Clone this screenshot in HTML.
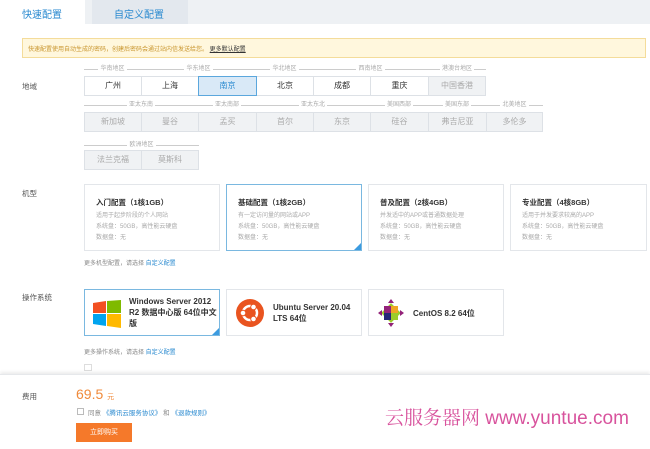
<!DOCTYPE html>
<html><head><meta charset="utf-8"><style>
*{margin:0;padding:0;box-sizing:border-box}
body{width:650px;height:449px;background:#fff;font-family:"Liberation Sans","Noto Sans CJK SC",sans-serif;position:relative;overflow:hidden;color:#333}
.a{position:absolute;white-space:nowrap}
.btn{position:absolute;height:20px;border:1px solid #dde1e6;font-size:8px;text-align:center;line-height:18px;background:#fff;color:#333}
.dis{background:#f0f2f4;color:#aaa}
.sel{background:#d9e9f7;border-color:#5ba7dd;color:#2a8ad0;z-index:2}
.gl{position:absolute;font-size:6px;color:#aaa;text-align:center;height:8px;line-height:8px}
.gl span{background:#fff;padding:0 2px;position:relative}
.gl:before{content:"";position:absolute;left:0;right:0;top:4px;border-top:1px solid #ccc}
.card{position:absolute;border:1px solid #e3e6ea;background:#fff}
.card.s{border-color:#7ab8e0}
.card.s:after{content:"";position:absolute;right:0;bottom:0;border-style:solid;border-width:0 0 7px 7px;border-color:transparent transparent #3c9be0 transparent}
.ct{position:absolute;left:11px;top:12px;font-size:7.5px;color:#333;font-weight:bold}
.cl{position:absolute;left:11px;font-size:6px;color:#aaa}
.lab{position:absolute;left:22px;font-size:7.5px;color:#555}
.osn{position:absolute;font-size:8px;font-weight:bold;color:#333;line-height:11px}
</style></head><body>
<div class="a" style="left:0;top:0;width:650px;height:24px;background:#eef1f4"></div>
<div class="a" style="left:0;top:0;width:85px;height:24px;background:#fff"></div>
<div class="a" style="left:22px;top:6px;font-size:10px;color:#2a8ad0">快速配置</div>
<div class="a" style="left:92px;top:0;width:96px;height:24px;background:#e3e8ee"></div>
<div class="a" style="left:114px;top:6px;font-size:10px;color:#2a8ad0">自定义配置</div>

<div class="a" style="left:22px;top:38px;width:624px;height:20px;background:#fff7dd;border:1px solid #f4dc9a"></div>
<div class="a" style="left:28px;top:44px;font-size:6px;color:#c9962f">快速配置使用自动生成的密码，创建后密码会通过站内信发送给您。 <span style="color:#333;text-decoration:underline">更多默认配置</span></div>

<div class="lab" style="top:81px">地域</div>
<div class="gl" style="left:84px;top:65px;width:57px"><span>华南地区</span></div>
<div class="gl" style="left:141px;top:65px;width:115px"><span>华东地区</span></div>
<div class="gl" style="left:256px;top:65px;width:57px"><span>华北地区</span></div>
<div class="gl" style="left:313px;top:65px;width:115px"><span>西南地区</span></div>
<div class="gl" style="left:428px;top:65px;width:58px"><span>港澳台地区</span></div>
<div class="btn" style="left:84px;top:76px;width:58px">广州</div>
<div class="btn" style="left:141px;top:76px;width:58px">上海</div>
<div class="btn sel" style="left:198px;top:76px;width:59px">南京</div>
<div class="btn" style="left:256px;top:76px;width:58px">北京</div>
<div class="btn" style="left:313px;top:76px;width:58px">成都</div>
<div class="btn" style="left:370px;top:76px;width:59px">重庆</div>
<div class="btn dis" style="left:428px;top:76px;width:58px">中国香港</div>

<div class="gl" style="left:84px;top:101px;width:114px"><span>亚太东南</span></div>
<div class="gl" style="left:198px;top:101px;width:58px"><span>亚太南部</span></div>
<div class="gl" style="left:256px;top:101px;width:114px"><span>亚太东北</span></div>
<div class="gl" style="left:370px;top:101px;width:58px"><span>美国西部</span></div>
<div class="gl" style="left:428px;top:101px;width:58px"><span>美国东部</span></div>
<div class="gl" style="left:486px;top:101px;width:57px"><span>北美地区</span></div>
<div class="btn dis" style="left:84px;top:112px;width:58px">新加坡</div>
<div class="btn dis" style="left:141px;top:112px;width:58px">曼谷</div>
<div class="btn dis" style="left:198px;top:112px;width:59px">孟买</div>
<div class="btn dis" style="left:256px;top:112px;width:58px">首尔</div>
<div class="btn dis" style="left:313px;top:112px;width:58px">东京</div>
<div class="btn dis" style="left:370px;top:112px;width:59px">硅谷</div>
<div class="btn dis" style="left:428px;top:112px;width:59px">弗吉尼亚</div>
<div class="btn dis" style="left:486px;top:112px;width:57px">多伦多</div>

<div class="gl" style="left:84px;top:141px;width:115px"><span>欧洲地区</span></div>
<div class="btn dis" style="left:84px;top:150px;width:58px">法兰克福</div>
<div class="btn dis" style="left:141px;top:150px;width:58px">莫斯科</div>

<div class="lab" style="top:188px">机型</div>
<div class="card" style="left:84px;top:184px;width:136px;height:67px"><div class="ct">入门配置（1核1GB）</div><div class="cl" style="top:25px">适用于起步阶段的个人网站</div><div class="cl" style="top:36px">系统盘：50GB，高性能云硬盘</div><div class="cl" style="top:47px">数据盘：无</div></div>
<div class="card s" style="left:226px;top:184px;width:136px;height:67px"><div class="ct">基础配置（1核2GB）</div><div class="cl" style="top:25px">有一定访问量的网站或APP</div><div class="cl" style="top:36px">系统盘：50GB，高性能云硬盘</div><div class="cl" style="top:47px">数据盘：无</div></div>
<div class="card" style="left:368px;top:184px;width:136px;height:67px"><div class="ct">普及配置（2核4GB）</div><div class="cl" style="top:25px">并发适中的APP或普通数据处理</div><div class="cl" style="top:36px">系统盘：50GB，高性能云硬盘</div><div class="cl" style="top:47px">数据盘：无</div></div>
<div class="card" style="left:510px;top:184px;width:137px;height:67px"><div class="ct">专业配置（4核8GB）</div><div class="cl" style="top:25px">适用于并发要求较高的APP</div><div class="cl" style="top:36px">系统盘：50GB，高性能云硬盘</div><div class="cl" style="top:47px">数据盘：无</div></div>
<div class="a" style="left:84px;top:258px;font-size:6px;color:#888">更多机型配置，请选择 <span style="color:#2a8ad0">自定义配置</span></div>

<div class="lab" style="top:292px">操作系统</div>
<div class="card s" style="left:84px;top:289px;width:136px;height:47px">
<svg style="position:absolute;left:8px;top:10px" width="28" height="28" viewBox="0 0 28 28"><path d="M0 3L13 1V13H0Z" fill="#f25022"/><path d="M14 1L28 0V13H14Z" fill="#7fba00"/><path d="M0 14H13V26L0 24Z" fill="#00a4ef"/><path d="M14 14H28V28L14 26Z" fill="#ffb900"/></svg>
<div class="osn" style="left:44px;top:6px">Windows Server 2012<br>R2 数据中心版 64位中文<br>版</div></div>
<div class="card" style="left:226px;top:289px;width:136px;height:47px">
<svg style="position:absolute;left:9px;top:9px" width="28" height="28" viewBox="0 0 28 28"><circle cx="14" cy="14" r="14" fill="#e95420"/><circle cx="14" cy="14" r="7" fill="none" stroke="#fff" stroke-width="2.5"/><circle cx="7" cy="14" r="2.8" fill="#fff" stroke="#e95420"/><circle cx="17.5" cy="8" r="2.8" fill="#fff" stroke="#e95420"/><circle cx="17.5" cy="20" r="2.8" fill="#fff" stroke="#e95420"/></svg>
<div class="osn" style="left:46px;top:12px">Ubuntu Server 20.04<br>LTS 64位</div></div>
<div class="card" style="left:368px;top:289px;width:136px;height:47px">
<svg style="position:absolute;left:9px;top:9px" width="26" height="28" viewBox="0 0 26 28"><rect x="6" y="7" width="14" height="14" fill="#9ccd2a" transform="rotate(45 13 14)"/><rect x="6" y="7" width="7" height="7" fill="#932279"/><rect x="13" y="7" width="7" height="7" fill="#efa724"/><rect x="6" y="14" width="7" height="7" fill="#262577"/><rect x="13" y="14" width="7" height="7" fill="#9ccd2a"/><path d="M13 0L16 4H10ZM13 28L10 24H16ZM0 14L4 11V17ZM26 14L22 17V11Z" fill="#932279"/></svg>
<div class="osn" style="left:44px;top:18px">CentOS 8.2 64位</div></div>
<div class="a" style="left:84px;top:347px;font-size:6px;color:#888">更多操作系统，请选择 <span style="color:#2a8ad0">自定义配置</span></div>
<div class="a" style="left:84px;top:364px;width:8px;height:7px;border:1px solid #ddd"></div>

<div class="a" style="left:0;top:374px;width:650px;height:75px;background:#fff;box-shadow:0 -2px 3px rgba(0,0,0,.08);border-top:1px solid #e6e8eb"></div>
<div class="lab" style="top:391px">费用</div>
<div class="a" style="left:76px;top:386px;font-size:14px;color:#f08a3a">69.5 <span style="font-size:7px">元</span></div>
<div class="a" style="left:77px;top:408px;width:7px;height:7px;border:1px solid #bbb"></div>
<div class="a" style="left:88px;top:407px;font-size:6.5px;color:#888">同意 <span style="color:#2a8ad0">《腾讯云服务协议》</span> 和 <span style="color:#2a8ad0">《退款规则》</span></div>
<div class="a" style="left:76px;top:423px;width:56px;height:19px;background:#f5792a;color:#fff;font-size:7px;text-align:center;line-height:19px">立即购买</div>
<div class="a" style="left:385px;top:403px;font-size:19px;color:#d8539d;font-family:'Liberation Sans','Noto Serif CJK SC',sans-serif">云服务器网 www.yuntue.com</div>
</body></html>
